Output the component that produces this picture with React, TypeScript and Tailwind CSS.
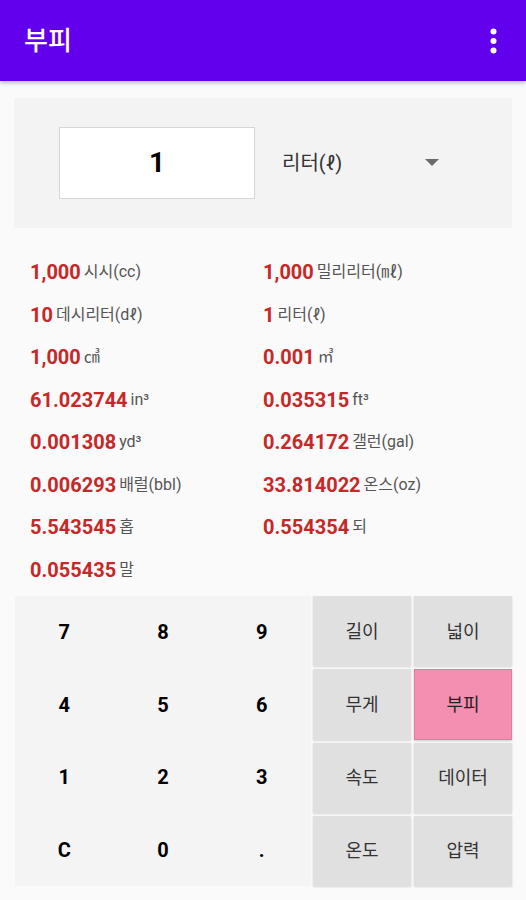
const results: [string, string][] = [
  ["1,000", "시시(cc)"],
  ["1,000", "밀리리터(㎖)"],
  ["10", "데시리터(dℓ)"],
  ["1", "리터(ℓ)"],
  ["1,000", "㎤"],
  ["0.001", "㎥"],
  ["61.023744", "in³"],
  ["0.035315", "ft³"],
  ["0.001308", "yd³"],
  ["0.264172", "갤런(gal)"],
  ["0.006293", "배럴(bbl)"],
  ["33.814022", "온스(oz)"],
  ["5.543545", "홉"],
  ["0.554354", "되"],
  ["0.055435", "말"],
];

const keys = ["7", "8", "9", "4", "5", "6", "1", "2", "3", "C", "0", "."];
const categories = ["길이", "넓이", "무게", "부피", "속도", "데이터", "온도", "압력"];

export default function App() {
  return (
    <div className="min-h-[900px] bg-[#fafafa] font-['Roboto','Noto_Sans_CJK_KR',sans-serif]">
      <header className="h-[81px] bg-[#6200ee] flex items-center justify-between pl-[24px] pr-[29px] shadow-[0_2px_4px_rgba(0,0,0,0.25)]">
        <h1 className="text-white text-[26px] font-medium leading-none">부피</h1>
        {/* overflow menu */}
        <svg width="7" height="26" viewBox="0 0 7 26">
          <circle cx="3.5" cy="3.5" r="3" fill="white" />
          <circle cx="3.5" cy="13" r="3" fill="white" />
          <circle cx="3.5" cy="22.5" r="3" fill="white" />
        </svg>
      </header>

      <div className="mx-[14px] mt-[17px] h-[130px] bg-[#f3f3f3] flex items-center pl-[45px]">
        <div className="w-[196px] h-[72px] bg-white border border-[#d6d6d6] flex items-center justify-center">
          <span className="text-[28px] font-bold text-black">1</span>
        </div>
        <div className="ml-[27px] flex-1 flex items-center">
          <span className="text-[20px] text-[#333]">리터(ℓ)</span>
          <svg className="ml-[83px]" width="14" height="8" viewBox="0 0 14 8">
            <path d="M0 0 L14 0 L7 7 Z" fill="#6b6b6b" />
          </svg>
        </div>
      </div>

      <div className="mt-[23px] grid grid-cols-[233px_1fr] pl-[30px]">
        {results.map(([n, u], i) => (
          <div key={i} className="h-[42.5px] flex items-center gap-[3px]">
            <span className="text-[20px] font-bold text-[#c62828]">{n}</span>
            <span className="text-[16px] text-[#555]">{u}</span>
          </div>
        ))}
      </div>

      <div className="mt-[5px] ml-[15px] flex gap-[2px]">
        <div className="w-[296px] h-[290px] bg-[#f4f4f4] grid grid-cols-3 grid-rows-4">
          {keys.map((k) => (
            <div key={k} className="flex items-center justify-center text-[20px] font-bold text-black">
              {k}
            </div>
          ))}
        </div>
        <div className="grid grid-cols-[98px_98px] grid-rows-4 gap-[3px] h-[290px]">
          {categories.map((c) => (
            <div
              key={c}
              className={
                c === "부피"
                  ? "flex items-center justify-center text-[18px] text-[#222] bg-[#f48fb1] border border-[#e57a9e] shadow-[0_1px_2px_rgba(0,0,0,0.2)]"
                  : "flex items-center justify-center text-[18px] text-[#333] bg-[#e0e0e0] shadow-[0_1px_2px_rgba(0,0,0,0.15)]"
              }
            >
              {c}
            </div>
          ))}
        </div>
      </div>
    </div>
  );
}
